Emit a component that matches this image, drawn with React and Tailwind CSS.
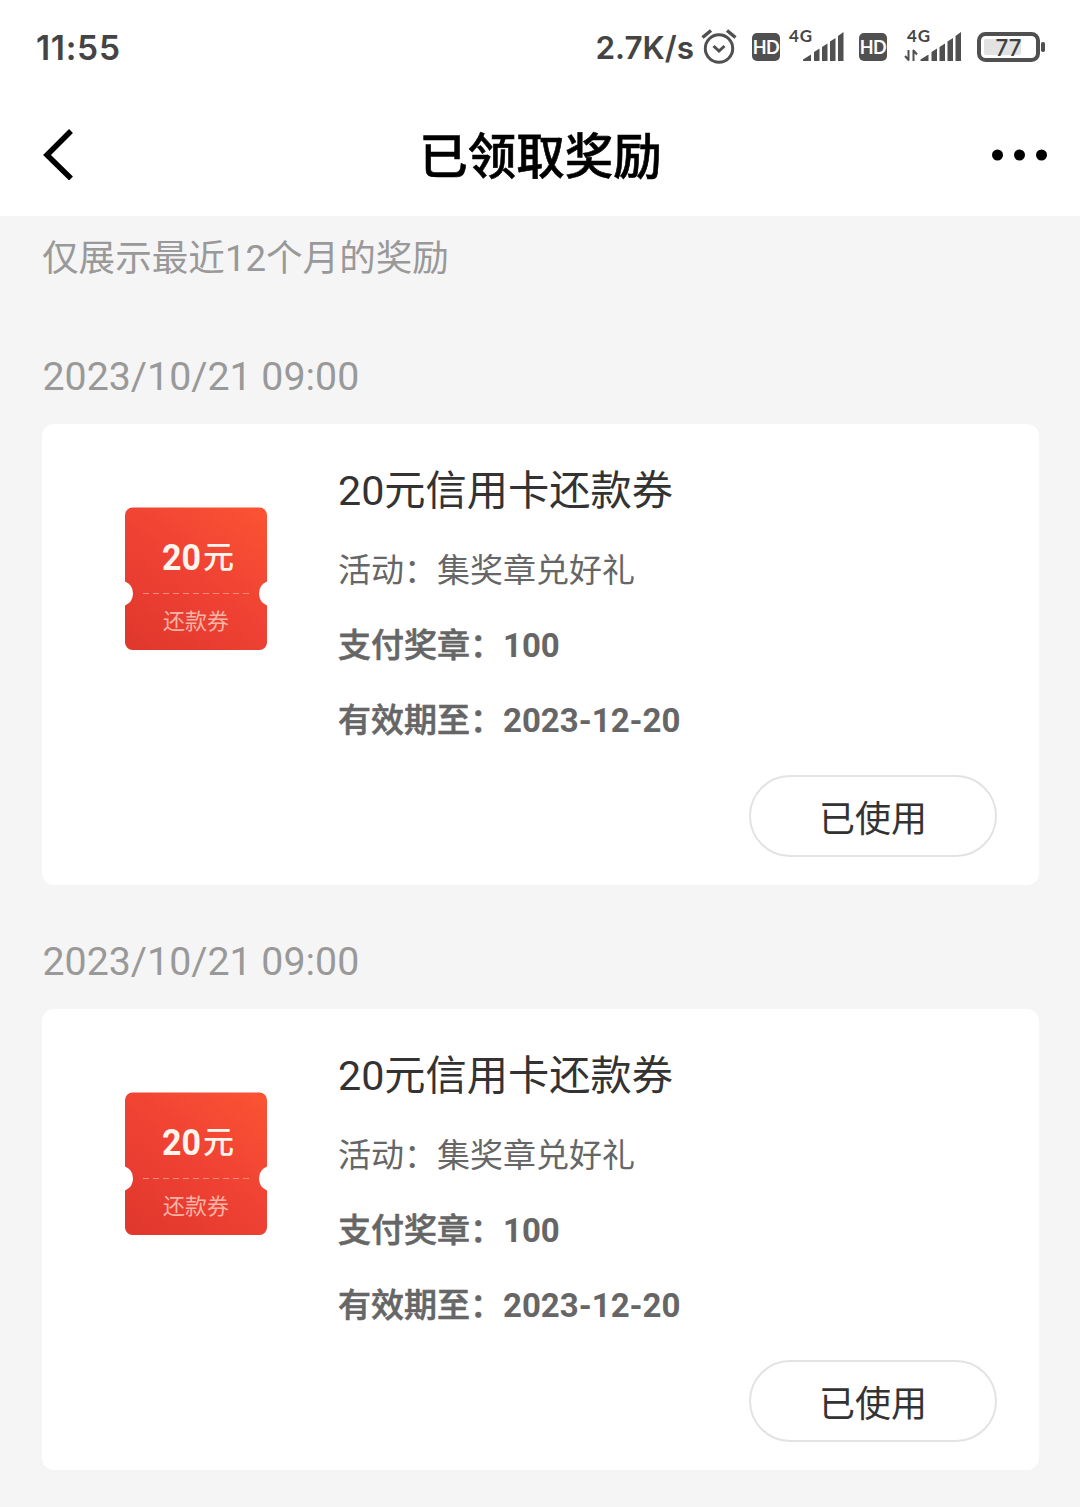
// src/App.jsx
const rewards = [
  {
    id: 1,
    time: '2023/10/21 09:00',
    title: '20元信用卡还款券',
    activity: '集奖章兑好礼',
    cost: 100,
    expires: '2023-12-20',
    status: '已使用',
  },
  {
    id: 2,
    time: '2023/10/21 09:00',
    title: '20元信用卡还款券',
    activity: '集奖章兑好礼',
    cost: 100,
    expires: '2023-12-20',
    status: '已使用',
  },
];

const AlarmIcon = ({ className }) => (
  <svg className={className} width="36" height="36" viewBox="0 0 36 36" fill="none" stroke="#505050" strokeWidth="3">
    <circle cx="18" cy="20.5" r="13.7" />
    <path d="M12.500 18l5.500 5 5.500-5" />
    <path d="M1.500 9.500L10 2.500M34.500 9.500L26 2.500" strokeWidth="3.500" />
  </svg>
);

const HdBadge = ({ className }) => (
  <div className={`flex h-7 w-7 items-center justify-center rounded-[5px] bg-[#505050] ${className}`}>
    <span className="font-['Lato'] text-[18px] leading-none font-bold tracking-[-0.5px] text-white">HD</span>
  </div>
);

const Signal = ({ arrows, className }) => (
  <svg className={className} width="58" height="48" viewBox="0 0 58 48" fill="#505050">
    <text x={arrows ? 3 : 1} y="19" fontFamily="Lato" fontWeight="700" fontSize="17" textLength="23" fill="#454545">4G</text>
    <path
      transform={arrows ? 'translate(1.5 0)' : undefined}
      d="M15 38v-1.500l8-5v6.500zM26 38v-9l5.500-3.500v12.500zM34 38v-14l5.500-3.500v17.500zM42 38v-19.500l5.500-3.500v23zM50 38v-25l5.500-4v29z"
    />
    {arrows && <path d="M4.500 27v10.500M5 37.500l-4-4.500M9.500 38v-11M9 27l4 4.500" fill="none" stroke="#505050" strokeWidth="2" />}
  </svg>
);

const Battery = ({ className }) => (
  <svg className={className} width="70" height="32" viewBox="0 0 70 32">
    <rect x="2" y="3" width="59" height="26" rx="6.500" fill="none" stroke="#505050" strokeWidth="4" />
    <rect x="7" y="8" width="37" height="16" rx="2" fill="#e2e2e2" />
    <rect x="64" y="11" width="4" height="10" rx="1.700" fill="#505050" />
    <text x="31.500" y="24.500" textAnchor="middle" fontFamily="Inter" fontWeight="500" fontSize="23" textLength="26" lengthAdjust="spacingAndGlyphs" fill="#3f3f3f">77</text>
  </svg>
);

const StatusBar = () => (
  <div className="flex h-[94px] items-center pr-[33px] pl-9 font-['Inter'] font-semibold text-[#444]">
    <span className="flex-1 pt-[2px] text-[33.500px] tracking-[0.7px]">11:55</span>
    <span className="pt-[2px] text-[31.500px]">2.7K/s</span>
    <AlarmIcon className="mb-[2px] ml-[7px]" />
    <HdBadge className="ml-[15px]" />
    <Signal className="ml-[8px]" />
    <HdBadge className="ml-[13px]" />
    <Signal arrows className="ml-[17px]" />
    <Battery className="ml-[15px]" />
  </div>
);

const Header = () => (
  <header className="flex h-[122px] items-center justify-between pr-8 pl-[42px]">
    <svg className="mb-[2px]" width="56" height="52" viewBox="0 0 56 52" fill="none" stroke="#000" strokeWidth="5.5">
      <path d="M29 3L5 27l24 23.500" />
    </svg>
    <h1 className="mt-[7px] mr-[9px] text-[48.500px] leading-none font-medium text-black [-webkit-text-stroke:0.6px_#000]">已领取奖励</h1>
    <svg width="56" height="12" viewBox="0 0 56 12">
      <circle cx="5.500" cy="6" r="5.500" />
      <circle cx="27.500" cy="6" r="5.500" />
      <circle cx="49.500" cy="6" r="5.500" />
    </svg>
  </header>
);

const Coupon = () => (
  <svg width="144" height="144" viewBox="0 0 144 144">
    <defs>
      <linearGradient id="coupon" x1="0.15" y1="1" x2="0.9" y2="0">
        <stop offset="0" stopColor="#e1382d" />
        <stop offset="0.5" stopColor="#ef4234" />
        <stop offset="1" stopColor="#fa5233" />
      </linearGradient>
    </defs>
    <path
      d="M8.500 .5h127a7.500 7.500 0 0 1 7.500 7.500v66.500a13 13 0 0 0 0 24v37a7.500 7.500 0 0 1-7.500 7.500h-127a7.500 7.500 0 0 1-7.500-7.500v-37a13 13 0 0 0 0-24v-66.500a7.500 7.500 0 0 1 7.500-7.500z"
      fill="url(#coupon)"
    />
    <path d="M19 86.500h108" stroke="#f98b7a" strokeWidth="1" strokeDasharray="6 4" />
    <text x="38" y="62.500" fontFamily="Roboto" fontWeight="700" fontSize="37" textLength="39" lengthAdjust="spacingAndGlyphs" fill="#fff5ed">20</text>
    <text x="79" y="61" fontFamily="Noto Sans CJK SC" fontWeight="500" fontSize="31" fill="#fff5ed">元</text>
    <text x="39" y="122" fontFamily="Noto Sans CJK SC" fontSize="22" fill="#fbb3a5">还款券</text>
  </svg>
);

const BoldRow = ({ label, value }) => (
  <p className="mt-[15px] text-[33px] leading-[60px] font-bold text-[#666]">
    <span className="font-medium [-webkit-text-stroke:0.6px_#666]">{label}：</span>
    {value}
  </p>
);

const RewardCard = ({ reward }) => (
  <section>
    <p className="h-[96px] pl-[0.500px] text-[39.300px] leading-[98px] text-[#999]">{reward.time}</p>
    <div className="flex h-[461px] rounded-xl bg-white">
      <div className="w-[296px] pt-[83px] pl-[82px]">
        <Coupon />
      </div>
      <div className="flex flex-1 flex-col pr-[42px]">
        <h2 className="mt-[37px] text-[41.250px] leading-[60px] text-[#333]">{reward.title}</h2>
        <p className="mt-[20px] text-[33px] leading-[60px] text-[#666]">活动：{reward.activity}</p>
        <BoldRow label="支付奖章" value={reward.cost} />
        <BoldRow label="有效期至" value={reward.expires} />
        <button className="mt-[24px] h-[82px] w-[248px] self-end rounded-full border-2 border-[#e3e3e3] pt-[7px] text-[36px] leading-none text-[#333]">
          {reward.status}
        </button>
      </div>
    </div>
  </section>
);

export default function App() {
  return (
    <div className="h-[1507px] w-[1080px] overflow-hidden bg-[#f5f5f5] font-['Roboto','Noto_Sans_CJK_SC',sans-serif]">
      <div className="bg-white">
        <StatusBar />
        <Header />
      </div>
      <main className="pr-[41px] pl-[42px]">
        <p className="h-[112px] pt-[13px] text-[36.600px] leading-[60px] text-[#999]">仅展示最近12个月的奖励</p>
        <div className="flex flex-col gap-[28px]">
          {rewards.map((reward) => (
            <RewardCard key={reward.id} reward={reward} />
          ))}
        </div>
      </main>
    </div>
  );
}
